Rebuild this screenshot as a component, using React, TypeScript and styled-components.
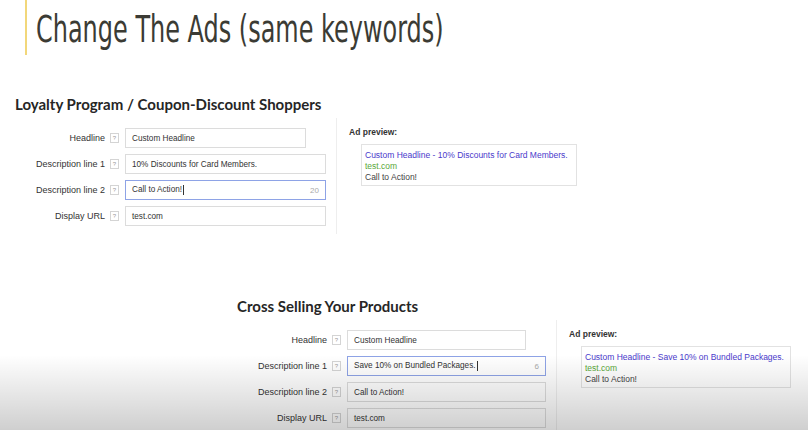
import styled, { createGlobalStyle } from "styled-components";

const GlobalStyle = createGlobalStyle`
  body {
    margin: 0;
    background: #ffffff;
    font-family: "Liberation Sans", Arial, sans-serif;
  }
`;

interface IField {
  label: string;
  value: string;
  width: number;
  focused?: boolean;
  count?: string;
}

interface IAd {
  title: string;
  fields: IField[];
  headline: string;
  previewWidth: number;
}

const ads: IAd[] = [
  {
    title: "Loyalty Program / Coupon-Discount Shoppers",
    headline: "Custom Headline - 10% Discounts for Card Members.",
    previewWidth: 216,
    fields: [
      { label: "Headline", value: "Custom Headline", width: 181 },
      { label: "Description line 1", value: "10% Discounts for Card Members.", width: 201 },
      { label: "Description line 2", value: "Call to Action!", width: 201, focused: true, count: "20" },
      { label: "Display URL", value: "test.com", width: 201 },
    ],
  },
  {
    title: "Cross Selling Your Products",
    headline: "Custom Headline - Save 10% on Bundled Packages.",
    previewWidth: 210,
    fields: [
      { label: "Headline", value: "Custom Headline", width: 179 },
      { label: "Description line 1", value: "Save 10% on Bundled Packages.", width: 199, focused: true, count: "6" },
      { label: "Description line 2", value: "Call to Action!", width: 199 },
      { label: "Display URL", value: "test.com", width: 199 },
    ],
  },
];

export default function App() {
  return (
    <>
      <GlobalStyle />
      <Page>
        <TitleBar>
          <Title>Change The Ads (same keywords)</Title>
        </TitleBar>

        <Section $offset={0} $top={40}>
          <SectionTitle>{ads[0].title}</SectionTitle>
          <AdEditor ad={ads[0]} />
        </Section>

        <Section $offset={222} $top={71}>
          <SectionTitle>{ads[1].title}</SectionTitle>
          <AdEditor ad={ads[1]} />
        </Section>

        <Shade />
      </Page>
    </>
  );
}

const AdEditor = ({ ad }: { ad: IAd }) => {
  return (
    <Editor>
      <Form>
        {ad.fields.map((f) => (
          <Row key={f.label}>
            <Label>{f.label}</Label>
            <Help>?</Help>
            <Input $width={f.width} $focused={!!f.focused}>
              <span>
                {f.value}
                {f.focused && <Caret />}
              </span>
              {f.count && <Count>{f.count}</Count>}
            </Input>
          </Row>
        ))}
      </Form>
      <Divider />
      <Preview>
        <PreviewLabel>Ad preview:</PreviewLabel>
        <PreviewBox $width={ad.previewWidth}>
          <AdHeadline>{ad.headline}</AdHeadline>
          <AdUrl>test.com</AdUrl>
          <AdLine>Call to Action!</AdLine>
        </PreviewBox>
      </Preview>
    </Editor>
  );
};

const Page = styled.div`
  position: relative;
  width: 808px;
  height: 430px;
  overflow: hidden;
  background: #ffffff;
`;

const TitleBar = styled.div`
  margin-left: 25px;
  height: 55px;
  border-left: 2px solid #f2d77a;
  padding-left: 9px;
  display: flex;
  align-items: center;
`;

const Title = styled.h1`
  margin: 3px 0 0;
  font-family: "DejaVu Sans Condensed", "DejaVu Sans", sans-serif;
  font-stretch: condensed;
  font-weight: normal;
  font-size: 37px;
  color: #3b3b34;
  white-space: nowrap;
  transform: scaleX(0.72);
  transform-origin: left center;
`;

const Section = styled.section<{ $offset: number; $top: number }>`
  margin-left: ${(p) => p.$offset}px;
  margin-top: ${(p) => p.$top}px;
`;

const SectionTitle = styled.h2`
  margin: 0 0 0 15px;
  font-family: Lato, "Open Sans", sans-serif;
  font-weight: bold;
  font-size: 15px;
  line-height: 18px;
  color: #262626;
  white-space: nowrap;
`;

const Editor = styled.div`
  display: flex;
  margin-top: 13px;
`;

const Form = styled.div`
  display: flex;
  flex-direction: column;
  gap: 6px;
  padding-top: 2px;
`;

const Row = styled.div`
  display: flex;
  align-items: center;
  height: 20px;
`;

const Label = styled.div`
  width: 105px;
  text-align: right;
  font-size: 9px;
  color: #333333;
  white-space: nowrap;
`;

const Help = styled.span`
  margin-left: 5px;
  width: 7px;
  height: 8px;
  border: 1px solid #d4d4d4;
  font-size: 6px;
  line-height: 8px;
  text-align: center;
  color: #999999;
`;

const Input = styled.div<{ $width: number; $focused: boolean }>`
  margin-left: 6px;
  width: ${(p) => p.$width}px;
  height: 20px;
  box-sizing: border-box;
  border: 1px solid ${(p) => (p.$focused ? "#8ea3e6" : "#dcdcdc")};
  padding: 0 6px;
  display: flex;
  align-items: center;
  justify-content: space-between;
  font-size: 8.2px;
  color: #333333;
  white-space: nowrap;
`;

const Caret = styled.span`
  display: inline-block;
  width: 1px;
  height: 10px;
  margin-left: 1px;
  vertical-align: middle;
  background: #333333;
`;

const Count = styled.span`
  font-size: 8px;
  color: #aaaaaa;
`;

const Divider = styled.div`
  margin-left: 10px;
  width: 1px;
  align-self: stretch;
  margin-top: -8px;
  margin-bottom: -8px;
  background: #eeeeee;
`;

const Preview = styled.div`
  padding-left: 12px;
  padding-top: 1px;
`;

const PreviewLabel = styled.div`
  font-size: 8.5px;
  font-weight: bold;
  color: #333333;
`;

const PreviewBox = styled.div<{ $width: number }>`
  margin: 7px 0 0 12px;
  width: ${(p) => p.$width}px;
  height: 42px;
  box-sizing: border-box;
  border: 1px solid #e2e2e2;
  padding: 5px 3px;
  font-size: 8.5px;
  line-height: 11px;
  white-space: nowrap;
`;

const AdHeadline = styled.div`
  color: #4a3acb;
`;

const AdUrl = styled.div`
  color: #5aa83a;
`;

const AdLine = styled.div`
  color: #444444;
`;

const Shade = styled.div`
  position: absolute;
  left: 0;
  right: 0;
  bottom: 0;
  height: 75px;
  pointer-events: none;
  background: linear-gradient(to bottom, rgba(0, 0, 0, 0), rgba(0, 0, 0, 0.19));
`;
